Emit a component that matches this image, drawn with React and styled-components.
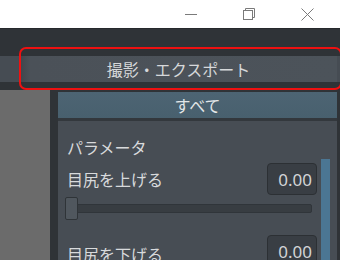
import React from "react";
import styled, { createGlobalStyle } from "styled-components";

const Global = createGlobalStyle`
  html, body { margin: 0; padding: 0; background: #2f3337; }
  body { font-family: "Noto Sans CJK JP", "Noto Sans", sans-serif; overflow: hidden; }
  * { box-sizing: border-box; }
`;

const Window = styled.div`
  width: 340px;
  height: 260px;
  display: flex;
  flex-direction: column;
  background: #2f3337;
  position: relative;
  overflow: hidden;
`;

const TitleBar = styled.div`
  height: 29px;
  background: #ffffff;
  border-bottom: 1px solid #26292c;
  display: flex;
  justify-content: flex-end;
  padding-right: 4px;
  flex-shrink: 0;
`;

const WinButton = styled.div`
  width: 58px;
  height: 28px;
  display: flex;
  align-items: center;
  justify-content: center;
`;

const TopGap = styled.div`
  height: 27px;
  flex-shrink: 0;
`;

const TabStrip = styled.div`
  height: 26px;
  background: #464c53;
  display: flex;
  padding-left: 20px;
  padding-right: 3px;
  flex-shrink: 0;
`;

const Tab = styled.div`
  flex: 1;
  background: linear-gradient(90deg, #41464c 0px, #4b5158 10px, #4c535a 100%);
  color: #d6d8da;
  font-size: 16px;
  display: flex;
  align-items: center;
  justify-content: center;
`;

const Highlight = styled.div`
  position: absolute;
  left: 19px;
  top: 47px;
  width: 323px;
  height: 43px;
  border: 2px solid #ee1111;
  border-radius: 7px;
  pointer-events: none;
`;

const Main = styled.div`
  flex: 1;
  margin-top: 8px;
  display: flex;
  gap: 8px;
  padding-right: 3px;
`;

const LeftPanel = styled.div`
  width: 50px;
  background: #6b6b6b;
`;

const RightPanel = styled.div`
  flex: 1;
  padding-top: 2px;
  display: flex;
  flex-direction: column;
`;

const PanelHeader = styled.div`
  height: 26px;
  background: linear-gradient(#4d6473, #48606e);
  color: #e2e6e8;
  font-size: 16px;
  display: flex;
  align-items: center;
  justify-content: center;
  border-bottom: 3px solid #33383d;
  box-sizing: content-box;
`;

const PanelBody = styled.div`
  flex: 1;
  background: #474d54;
  display: flex;
  position: relative;
`;

const Content = styled.div`
  flex: 1;
  padding: 16px 0 0 9px;
  display: flex;
  flex-direction: column;
`;

const SectionTitle = styled.div`
  color: #d8dadc;
  font-size: 16px;
  line-height: 20px;
  margin-bottom: 6px;
`;

const ParamRow = styled.div`
  display: flex;
  align-items: center;
  justify-content: space-between;
  padding-right: 1px;
  height: 32px;
`;

const Label = styled.div`
  color: #d8dadc;
  font-size: 16px;
  line-height: 20px;
  padding-top: ${p => p.$pt || 0}px;
`;

const ValueBox = styled.div`
  width: 50px;
  height: 32px;
  background: #393e44;
  border: 1px solid #2c3034;
  border-radius: 4px;
  color: #d2d4d6;
  font-size: 17px;
  font-family: "Noto Sans", sans-serif;
  display: flex;
  align-items: center;
  justify-content: flex-end;
  padding-right: 4px;
`;

const Slider = styled.div`
  position: relative;
  height: 23px;
  margin: 2px 6px 15px -2px;
  display: flex;
  align-items: center;
`;

const Track = styled.div`
  flex: 1;
  height: 9px;
  background: #383d42;
  border: 1px solid #30353a;
  border-radius: 2px;
`;

const Handle = styled.div`
  position: absolute;
  left: 0;
  top: 0;
  width: 13px;
  height: 23px;
  background: #50575e;
  border: 1px solid #2f3438;
  border-radius: 2px;
`;

const ScrollCol = styled.div`
  width: 14px;
  padding: 38px 0 0 0;
  margin-right: 5px;
  display: flex;
  justify-content: center;
`;

const ScrollThumb = styled.div`
  width: 9px;
  height: 200px;
  background: #4b7693;
`;

export default function App() {
  return (
    <Window>
      <Global />
      <TitleBar>
        <WinButton>
          <svg width="12" height="12" viewBox="0 0 12 12">
            <line x1="0" y1="6.5" x2="12" y2="6.5" stroke="#7a7a7a" strokeWidth="1" />
          </svg>
        </WinButton>
        <WinButton>
          <svg width="12" height="12" viewBox="0 0 12 12">
            <rect x="0.5" y="2.5" width="9" height="9" fill="none" stroke="#7a7a7a" />
            <path d="M2.5 2.5 V0.5 H11.5 V9.5 H9.5" fill="none" stroke="#7a7a7a" />
          </svg>
        </WinButton>
        <WinButton>
          <svg width="13" height="13" viewBox="0 0 13 13">
            <path d="M0.5 0.5 L12.5 12.5 M12.5 0.5 L0.5 12.5" stroke="#7a7a7a" strokeWidth="1" />
          </svg>
        </WinButton>
      </TitleBar>
      <TopGap />
      <TabStrip>
        <Tab>撮影・エクスポート</Tab>
      </TabStrip>
      <Highlight />
      <Main>
        <LeftPanel />
        <RightPanel>
          <PanelHeader>すべて</PanelHeader>
          <PanelBody>
            <Content>
              <SectionTitle>パラメータ</SectionTitle>
              <ParamRow>
                <Label>目尻を上げる</Label>
                <ValueBox>0.00</ValueBox>
              </ParamRow>
              <Slider>
                <Track />
                <Handle />
              </Slider>
              <ParamRow>
                <Label $pt={6}>目尻を下げる</Label>
                <ValueBox>0.00</ValueBox>
              </ParamRow>
            </Content>
            <ScrollCol>
              <ScrollThumb />
            </ScrollCol>
          </PanelBody>
        </RightPanel>
      </Main>
    </Window>
  );
}
